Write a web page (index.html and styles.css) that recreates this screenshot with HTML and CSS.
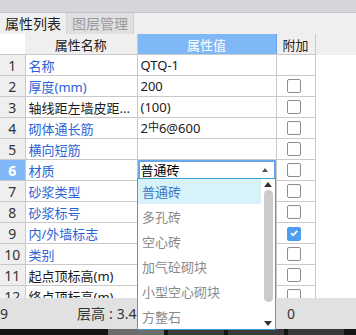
FILE: index.html
```html
<!DOCTYPE html>
<html lang="zh-CN">
<head>
    <meta charset="UTF-8">
    <title>属性列表</title>
    <link rel="stylesheet" href="styles.css">
</head>
<body>
    <div class="topbar"></div>
    <div class="tabs">
        <div class="tab active">属性列表</div>
        <div class="tab">图层管理</div>
    </div>
    <div class="grid-wrap">
        <table class="grid">
            <colgroup>
                <col class="c-no">
                <col class="c-name">
                <col class="c-val">
                <col class="c-chk">
                <col>
            </colgroup>
            <thead>
                <tr>
                    <th class="no-head"></th>
                    <th>属性名称</th>
                    <th class="val-head">属性值</th>
                    <th>附加</th>
                    <th class="empty-head"></th>
                </tr>
            </thead>
            <tbody>
                <tr><td class="no">1</td><td class="name blue">名称</td><td class="val">QTQ-1</td><td class="chk"></td><td class="rest"></td></tr>
                <tr><td class="no">2</td><td class="name blue">厚度(mm)</td><td class="val">200</td><td class="chk"><span class="box"></span></td><td class="rest"></td></tr>
                <tr><td class="no">3</td><td class="name">轴线距左墙皮距...</td><td class="val">(100)</td><td class="chk"><span class="box"></span></td><td class="rest"></td></tr>
                <tr><td class="no">4</td><td class="name blue">砌体通长筋</td><td class="val">2<span class="steel">中</span>6@600</td><td class="chk"><span class="box"></span></td><td class="rest"></td></tr>
                <tr><td class="no">5</td><td class="name blue">横向短筋</td><td class="val"></td><td class="chk"><span class="box"></span></td><td class="rest"></td></tr>
                <tr class="current"><td class="no">6</td><td class="name blue">材质</td><td class="val editing"><div class="combo">普通砖<span class="combo-arrow"></span></div></td><td class="chk"><span class="box"></span></td><td class="rest"></td></tr>
                <tr><td class="no">7</td><td class="name blue">砂浆类型</td><td class="val"></td><td class="chk"><span class="box"></span></td><td class="rest"></td></tr>
                <tr><td class="no">8</td><td class="name blue">砂浆标号</td><td class="val"></td><td class="chk"><span class="box"></span></td><td class="rest"></td></tr>
                <tr><td class="no">9</td><td class="name blue">内/外墙标志</td><td class="val"></td><td class="chk"><span class="box checked"><svg viewBox="0 0 12 12" width="12" height="12"><path d="M3 6.2 L5.2 8.3 L9.2 3.8" fill="none" stroke="#fff" stroke-width="1.8"/></svg></span></td><td class="rest"></td></tr>
                <tr><td class="no">10</td><td class="name blue">类别</td><td class="val"></td><td class="chk"><span class="box"></span></td><td class="rest"></td></tr>
                <tr><td class="no">11</td><td class="name">起点顶标高(m)</td><td class="val"></td><td class="chk"><span class="box"></span></td><td class="rest"></td></tr>
                <tr><td class="no">12</td><td class="name">终点顶标高(m)</td><td class="val"></td><td class="chk"><span class="box"></span></td><td class="rest"></td></tr>
            </tbody>
        </table>
    </div>
    <div class="status">
        <span class="st-a">9</span>
        <span class="st-b">层高<span class="colon">:</span>3.4</span>
        <span class="st-c">0</span>
    </div>
    <div class="taskbar">
        <span class="tb-btn tb-1"></span>
        <span class="tb-btn tb-2"></span>
        <span class="tb-btn tb-3"></span>
        <span class="tb-btn tb-4"></span>
    </div>

    <div class="dropdown">
        <ul class="options">
            <li class="selected">普通砖</li>
            <li>多孔砖</li>
            <li>空心砖</li>
            <li>加气砼砌块</li>
            <li>小型空心砌块</li>
            <li>方整石</li>
        </ul>
        <div class="scroll">
            <span class="arrow-up"></span>
            <span class="thumb"></span>
            <span class="arrow-down"></span>
        </div>
    </div>
</body>
</html>
```

FILE: styles.css
```css
body {
    margin: 0;
    width: 356px;
    height: 335px;
    overflow: hidden;
    position: relative;
    background: #efefef;
    font-family: "Noto Sans", "Noto Sans CJK SC", sans-serif;
    font-size: 13px;
    color: #1a1a1a;
}

.topbar {
    height: 12px;
    background: #d5d6da;
    border-bottom: 1px solid #c4c5c9;
}

.tabs {
    display: flex;
    height: 21px;
    background: #efefef;
}

.tab {
    width: 61px;
    line-height: 21px;
    padding-left: 5px;
    font-size: 14px;
    color: #9a9a9a;
    background: #e0e0e0;
    border-right: 1px solid #cfcfcf;
}

.tab.active {
    background: #efefef;
    color: #222;
    border-right: 1px solid #d8d8d8;
}

.grid-wrap {
    height: 264px;
    overflow: hidden;
    background: #fff;
}

.grid {
    width: 356px;
    table-layout: fixed;
    border-collapse: collapse;
}

.c-no { width: 25px; }
.c-name { width: 112px; }
.c-val { width: 139px; }
.c-chk { width: 39px; }

.grid th {
    height: 20px;
    padding: 0;
    font-weight: normal;
    font-size: 13px;
    background: #efefef;
    color: #222;
    border-right: 1px solid #c9c9c9;
    border-bottom: 1px solid #c9c9c9;
}

.grid th.no-head {
    background: #fff;
    border-right: none;
}

.grid th.val-head {
    background: #7fb7f7;
    color: #fff;
    border-right: 1px solid #6aa3e6;
}

.grid th.empty-head {
    border-right: none;
    border-bottom: none;
}

.grid td {
    height: 20px;
    padding: 0;
    border: 1px solid #c9c9c9;
    white-space: nowrap;
    overflow: hidden;
}

.grid td.no {
    background: #efefef;
    text-align: center;
    font-size: 14px;
    color: #333;
    border-left: none;
}

.grid td.name {
    padding-left: 3px;
}

.grid td.blue {
    color: #2b63d6;
}

.grid td.val {
    padding-left: 3px;
}

.steel {
    font-size: 11px;
    position: relative;
    top: -2px;
}

.grid td.rest {
    border: none;
    border-left: 1px solid #c9c9c9;
}

.grid td.chk {
    padding-left: 10px;
}

.box {
    display: block;
    width: 12px;
    height: 12px;
    border: 1px solid #8c8c8c;
    border-radius: 2px;
    background: #fff;
}

.box.checked {
    width: 14px;
    height: 14px;
    border: none;
    background: #4d9df2;
}

.box.checked svg {
    display: block;
    margin: 1px;
}

.current td.no {
    background: #7fb7f7;
    color: #fff;
    font-weight: bold;
}

.grid td.editing {
    padding: 0;
}

.combo {
    height: 16px;
    line-height: 16px;
    border: 2px solid #66a7ea;
    padding-left: 1px;
    color: #000;
    position: relative;
}

.combo-arrow {
    position: absolute;
    right: 6px;
    top: 6px;
    border-left: 3px solid transparent;
    border-right: 3px solid transparent;
    border-bottom: 4px solid #555;
}

.status {
    height: 31px;
    background: #e1e1e1;
    position: relative;
    font-size: 14px;
    color: #333;
    line-height: 31px;
}

.colon {
    margin: 0 4px;
}

.st-a { position: absolute; left: 0; }
.st-b { position: absolute; left: 77px; }
.st-c { position: absolute; left: 287px; }

.taskbar {
    height: 6px;
    background: #151515;
    display: flex;
    gap: 4px;
    padding-left: 108px;
}

.tb-btn {
    width: 56px;
    height: 6px;
    background: #3a3a3a;
}

.tb-1 { background: #6c6c6c; }

.dropdown {
    position: absolute;
    left: 137px;
    top: 178px;
    width: 137px;
    height: 150px;
    border: 1px solid #3fa0d4;
    background: #fff;
    display: flex;
}

.options {
    list-style: none;
    margin: 0;
    padding: 0;
    flex: 1;
}

.options li {
    height: 25px;
    line-height: 26px;
    padding-left: 4px;
    font-size: 13px;
    color: #8a8a8a;
}

.options li.selected {
    background: #d8f2fa;
    color: #3b78c8;
}

.scroll {
    width: 14px;
    display: flex;
    flex-direction: column;
    align-items: center;
    padding: 3px 0;
}

.arrow-up {
    border-left: 4px solid transparent;
    border-right: 4px solid transparent;
    border-bottom: 5px solid #333;
}

.thumb {
    width: 9px;
    height: 112px;
    margin-top: 3px;
    border-radius: 5px;
    background: #cbcbcb;
}

.arrow-down {
    margin-top: auto;
    border-left: 4px solid transparent;
    border-right: 4px solid transparent;
    border-top: 5px solid #333;
}
```
